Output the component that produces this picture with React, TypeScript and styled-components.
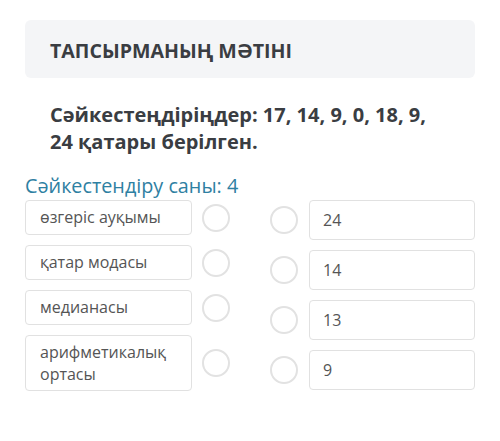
import styled, { createGlobalStyle } from "styled-components"

const GlobalStyle = createGlobalStyle`
  html, body {
    margin: 0;
    padding: 0;
    background: #ffffff;
  }
  body {
    font-family: "Open Sans", "Noto Sans", sans-serif;
  }
`

const leftItems = ["өзгеріс ауқымы", "қатар модасы", "медианасы", "арифметикалық ортасы"]
const rightItems = ["24", "14", "13", "9"]

export default function App() {
    return (
        <>
            <GlobalStyle />
            <Page>
                <Header>
                    <HeaderTitle>ТАПСЫРМАНЫҢ МӘТІНІ</HeaderTitle>
                </Header>
                <Question>
                    Сәйкестеңдіріңдер: 17, 14, 9, 0, 18, 9,
                    <br />
                    24 қатары берілген.
                </Question>
                <Count>Сәйкестендіру саны: 4</Count>
                <Columns>
                    <Column>
                        {leftItems.map((item) => (
                            <LeftRow key={item}>
                                <LeftCard>{item}</LeftCard>
                                <Radio />
                            </LeftRow>
                        ))}
                    </Column>
                    <Column>
                        {rightItems.map((item) => (
                            <RightRow key={item}>
                                <Radio />
                                <RightCard>{item}</RightCard>
                            </RightRow>
                        ))}
                    </Column>
                </Columns>
            </Page>
        </>
    )
}

const Page = styled.div`
  width: 500px;
  height: 441px;
  box-sizing: border-box;
  padding: 20px 25px 0 25px;
`

const Header = styled.div`
  height: 58px;
  background-color: #f4f5f7;
  border-radius: 6px;
  display: flex;
  align-items: center;
  padding-left: 25px;
  padding-top: 2px;
  box-sizing: border-box;
`

const HeaderTitle = styled.div`
  font-size: 19.6px;
  font-weight: 700;
  color: #3a3d42;
`

const Question = styled.div`
  margin-top: 23px;
  padding-left: 25px;
  font-size: 20px;
  font-weight: 700;
  line-height: 27px;
  color: #3a3d42;
`

const Count = styled.div`
  margin-top: 20px;
  font-size: 19.8px;
  line-height: 22px;
  color: #2e80a2;
`

const Columns = styled.div`
  display: flex;
  justify-content: space-between;
  margin-top: 3px;
`

const Column = styled.div`
  display: flex;
  flex-direction: column;
  gap: 10px;
`

const LeftRow = styled.div`
  display: flex;
  align-items: center;
  gap: 10px;
`

const RightRow = styled.div`
  display: flex;
  align-items: center;
  gap: 11px;
`

const Card = styled.div`
  box-sizing: border-box;
  border: 1px solid #e1e1e1;
  border-radius: 4px;
  background: #ffffff;
  font-size: 16px;
  line-height: 22px;
  color: #555555;
`

const LeftCard = styled(Card)`
  width: 167px;
  min-height: 35px;
  padding: 5px 14px;
`

const RightCard = styled(Card)`
  width: 166px;
  height: 40px;
  padding: 8px 13px;
`

const Radio = styled.div`
  width: 28px;
  height: 28px;
  box-sizing: border-box;
  border: 2px solid #e2e2e2;
  border-radius: 50%;
  flex-shrink: 0;
`
